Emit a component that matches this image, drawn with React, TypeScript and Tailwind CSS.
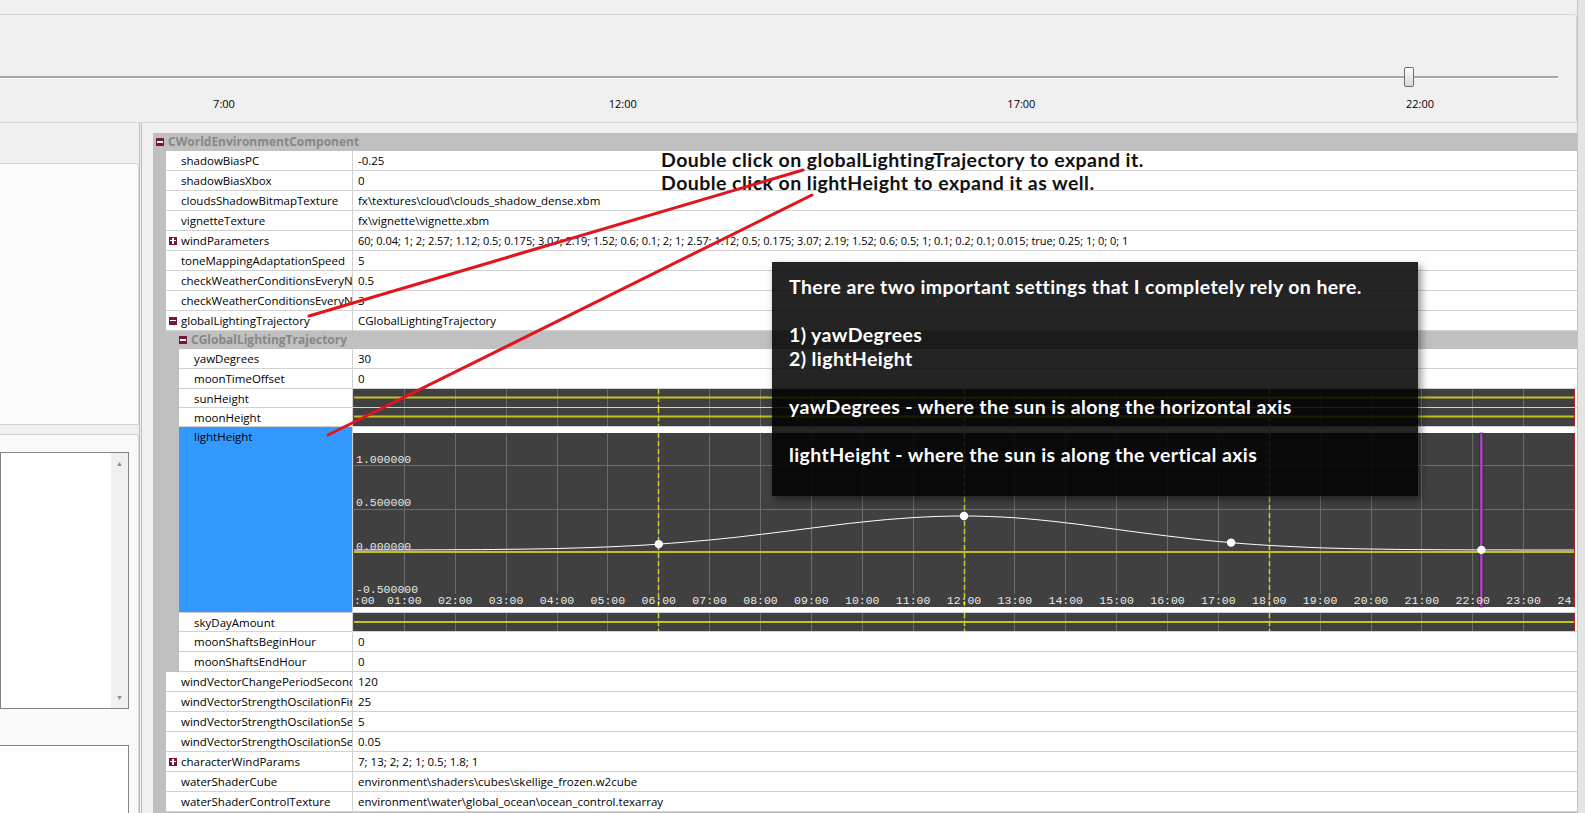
import React from "react";

const HOUR = 50.875;
const hx = (h: number) => 0.5 + h * HOUR;
const gx = (i: number) => Math.round(i * HOUR) + 0.5;
const CW = 1222;

function curveY(h: number) {
  const s = h < 12 ? 3.2 : 3.0;
  return 123 - 34 * Math.exp(-((h - 12) ** 2) / (2 * s * s));
}

function HourLines({ y1, y2 }: { y1: number; y2: number }) {
  return (
    <>
      {Array.from({ length: 25 }, (_, i) => (
        <line key={i} x1={gx(i)} x2={gx(i)} y1={y1} y2={y2} stroke="#6c6c6c" strokeWidth={1} />
      ))}
    </>
  );
}

function Dashed({ y1, y2 }: { y1: number; y2: number }) {
  return (
    <>
      {[6, 12, 18].map((h) => (
        <line key={h} x1={gx(h)} x2={gx(h)} y1={y1} y2={y2} stroke="#d2cf1c" strokeWidth={1.5} strokeDasharray="5 3" />
      ))}
    </>
  );
}

function Strip({ lineY = 8.5 }: { lineY?: number }) {
  const H = 19;
  return (
    <svg width={CW} height={H} className="block">
      <rect x={0} y={0} width={CW} height={H} fill="#404040" />
      <HourLines y1={0} y2={H} />
      <line x1={0} x2={CW} y1={lineY} y2={lineY} stroke="#c4c21e" strokeWidth={2} />
      <Dashed y1={0} y2={H} />
      <line x1={0.5} x2={0.5} y1={0} y2={H} stroke="#b02020" strokeWidth={1} />
      <line x1={gx(24)} x2={gx(24)} y1={0} y2={H} stroke="#b02020" strokeWidth={1} />
    </svg>
  );
}

function LightChart() {
  const H = 186;
  const top = 6;
  const bot = 180;
  const pts: string[] = [];
  for (let h = 0; h <= 24.001; h += 0.25) pts.push(`${hx(h).toFixed(1)},${curveY(h).toFixed(1)}`);
  const dots = [6, 12, 17.25, 22.17];
  return (
    <svg width={CW} height={H} className="block">
      <rect x={0} y={0} width={CW} height={H} fill="#ffffff" />
      <rect x={0} y={top} width={CW} height={bot - top} fill="#404040" />
      <HourLines y1={top} y2={167} />
      {[38.5, 82.5].map((y) => (
        <line key={y} x1={0} x2={CW} y1={y} y2={y} stroke="#6c6c6c" strokeWidth={1} />
      ))}
      <line x1={0} x2={CW} y1={125} y2={125} stroke="#c4c21e" strokeWidth={2} />
      <Dashed y1={top} y2={bot} />
      <polyline points={pts.join(" ")} fill="none" stroke="#ffffff" strokeWidth={1} />
      <rect x={hx(22.17) - 1.5} y={top} width={3} height={bot - top} fill="#b54cc6" stroke="#2a102e" strokeWidth={0.6} />
      {dots.map((h) => (
        <circle key={h} cx={hx(h)} cy={curveY(h)} r={4.2} fill="#ffffff" />
      ))}
      <g fontFamily="'Liberation Mono', monospace" fontSize={11.5} fill="#e8e8e8">
        <text x={3} y={36}>1.000000</text>
        <text x={3} y={79}>0.500000</text>
        <text x={3} y={123}>0.000000</text>
        <text x={3} y={166}>-0.500000</text>
        <text x={1} y={177}>:00</text>
        {Array.from({ length: 23 }, (_, k) => {
          const i = k + 1;
          return (
            <text key={i} x={hx(i)} y={177} textAnchor="middle">
              {String(i).padStart(2, "0") + ":00"}
            </text>
          );
        })}
        <text x={hx(24) - 17} y={177}>24:</text>
      </g>
      <line x1={0.5} x2={0.5} y1={top} y2={bot} stroke="#b02020" strokeWidth={1} />
      <line x1={gx(24)} x2={gx(24)} y1={top} y2={bot} stroke="#b02020" strokeWidth={1} />
    </svg>
  );
}

function Box({ sign }: { sign: "+" | "-" }) {
  return (
    <span className="w-[8px] h-[8px] bg-[#7e1438] flex items-center justify-center shrink-0 relative">
      <span className="w-[6px] h-[1.5px] bg-white" />
      {sign === "+" && <span className="absolute w-[1.5px] h-[6px] bg-white" />}
    </span>
  );
}

type RowProps = {
  name: string;
  value?: React.ReactNode;
  level?: 0 | 1;
  icon?: "+" | "-";
  h?: string;
  selected?: boolean;
  chart?: boolean;
};

function Row({ name, value, level = 0, icon, h = "h-[20px]", selected, chart }: RowProps) {
  return (
    <div className={`flex ${h} ${level === 0 ? "ml-[13px]" : "ml-[26px]"} bg-white border-b border-[#d2d2d2]`}>
      <div
        className={`${level === 0 ? "w-[187px]" : "w-[174px]"} shrink-0 border-r border-[#d2d2d2] flex items-start overflow-hidden whitespace-nowrap ${
          selected ? "bg-[#3399ff]" : ""
        }`}
      >
        <div className="h-[19px] flex items-center">
          <span className="w-[15px] shrink-0 pl-[3px] flex items-center">{icon && <Box sign={icon} />}</span>
          <span className="text-black leading-[16px]">{name}</span>
        </div>
      </div>
      <div className={`flex-1 min-w-0 overflow-hidden whitespace-nowrap ${chart ? "" : "pl-[5px] flex items-center"}`}>
        {value}
      </div>
    </div>
  );
}

function Header({ text, level = 0 }: { text: string; level?: 0 | 1 }) {
  return (
    <div className={`h-[18px] flex items-center gap-[4px] ${level === 0 ? "pl-[3px]" : "pl-[26px]"} bg-[#c0c0c0]`}>
      <Box sign="-" />
      <span className="font-bold text-[#878787] text-[12px]">{text}</span>
    </div>
  );
}

export default function App() {
  const hours = ["7:00", "12:00", "17:00", "22:00"];
  return (
    <div
      className="w-[1585px] h-[813px] bg-[#f0f0f0] overflow-hidden relative flex text-[11.5px] leading-none"
      style={{ fontFamily: "'Open Sans', 'Noto Sans', sans-serif" }}
    >
      <div className="w-[1577px] flex flex-col">
        {/* timeline */}
        <div className="h-[14px]" />
        <div className="h-[109px] w-[1577px] border-t border-b border-r border-[#d6d6d6] rounded-r-[3px] flex flex-col">
          <div className="h-[52px]" />
          <div className="flex items-center h-[20px]">
            <div className="w-[1404px] h-[3px] border-t-2 border-[#a8a8a8] bg-white" />
            <div className="w-[10px] h-[20px] rounded-[2px] border border-[#6f6f6f] bg-gradient-to-b from-white to-[#d8d8d8]" />
            <div className="w-[144px] h-[3px] border-t-2 border-[#a8a8a8] bg-white" />
          </div>
          <div className="mt-[11px] flex pl-[184px] gap-[318.7px] text-[11px] text-black">
            {hours.map((t) => (
              <div key={t} className="w-[80px] text-center">
                {t}
              </div>
            ))}
          </div>
        </div>

        {/* body */}
        <div className="flex flex-1 min-h-0">
          {/* left panel */}
          <div className="w-[142px] border-r-[3px] border-double border-[#bdbdbd] flex flex-col">
            <div className="h-[40px]" />
            <div className="h-[262px] w-[139px] border-t border-r border-b border-[#d2d2d2] rounded-tr-[3px] bg-[#fcfcfc]" />
            <div className="mt-[9px] flex-1 w-[139px] border-t border-r border-[#d2d2d2] rounded-tr-[3px] bg-[#fafafa] flex flex-col pt-[17px]">
              <div className="h-[257px] w-[129px] border border-[#848484] bg-white flex justify-end">
                <div className="w-[17px] bg-[#f0f0f0] flex flex-col justify-between items-center py-[7px] text-[7px] text-[#8a8a8a]">
                  <span>▲</span>
                  <span>▼</span>
                </div>
              </div>
              <div className="mt-[36px] flex-1 w-[129px] border-t border-r border-[#848484] bg-white" />
            </div>
          </div>
          <div className="w-[11px]" />

          {/* property grid */}
          <div className="flex-1 flex flex-col">
            <div className="h-[10px]" />
            <div className="flex-1 bg-[#c0c0c0] flex flex-col">
              <Header text="CWorldEnvironmentComponent" />
              <Row name="shadowBiasPC" value="-0.25" />
              <Row name="shadowBiasXbox" value="0" />
              <Row name="cloudsShadowBitmapTexture" value="fx\textures\cloud\clouds_shadow_dense.xbm" />
              <Row name="vignetteTexture" value="fx\vignette\vignette.xbm" />
              <Row
                name="windParameters"
                icon="+"
                value={
                  <span className="text-[11px]">
                    60; 0.04; 1; 2; 2.57; 1.12; 0.5; 0.175; 3.07; 2.19; 1.52; 0.6; 0.1; 2; 1; 2.57; 1.12; 0.5; 0.175; 3.07; 2.19; 1.52; 0.6; 0.5; 1; 0.1; 0.2; 0.1; 0.015; true; 0.25; 1; 0; 0; 1
                  </span>
                }
              />
              <Row name="toneMappingAdaptationSpeed" value="5" />
              <Row name="checkWeatherConditionsEveryNl" value="0.5" />
              <Row name="checkWeatherConditionsEveryNl" value="3" />
              <Row name="globalLightingTrajectory" icon="-" value="CGlobalLightingTrajectory" />
              <Header text="CGlobalLightingTrajectory" level={1} />
              <Row level={1} name="yawDegrees" value="30" />
              <Row level={1} name="moonTimeOffset" value="0" />
              <Row level={1} name="sunHeight" h="h-[19px]" chart value={<Strip />} />
              <Row level={1} name="moonHeight" h="h-[19px]" chart value={<Strip />} />
              <Row level={1} name="lightHeight" h="h-[186px]" selected chart value={<LightChart />} />
              <Row level={1} name="skyDayAmount" h="h-[19px]" chart value={<Strip lineY={9} />} />
              <Row level={1} name="moonShaftsBeginHour" value="0" />
              <Row level={1} name="moonShaftsEndHour" value="0" />
              <Row name="windVectorChangePeriodSecond" value="120" />
              <Row name="windVectorStrengthOscilationFir" value="25" />
              <Row name="windVectorStrengthOscilationSe" value="5" />
              <Row name="windVectorStrengthOscilationSe" value="0.05" />
              <Row name="characterWindParams" icon="+" value="7; 13; 2; 2; 1; 0.5; 1.8; 1" />
              <Row name="waterShaderCube" value="environment\shaders\cubes\skellige_frozen.w2cube" />
              <Row name="waterShaderControlTexture" value="environment\water\global_ocean\ocean_control.texarray" />
            </div>
          </div>
        </div>
      </div>
      {/* right scroll strip */}
      <div className="w-[8px] bg-[#e4e4e4] border-l border-[#c4c4c4]" />

      {/* annotations */}
      <div
        className="absolute left-[661px] top-[148px] text-[19.5px] tracking-[0.45px] leading-[23px] font-bold text-[#111] whitespace-nowrap"
        style={{ fontFamily: "Lato, 'Open Sans', sans-serif" }}
      >
        <div>Double click on globalLightingTrajectory to expand it.</div>
        <div>Double click on lightHeight to expand it as well.</div>
      </div>

      <svg className="absolute left-0 top-0 pointer-events-none" width={1585} height={813}>
        <line x1={309} y1={316} x2={803} y2={170} stroke="#e3141b" strokeWidth={3} strokeLinecap="round" />
        <line x1={328} y1={435} x2={812} y2={195} stroke="#e3141b" strokeWidth={3} strokeLinecap="round" />
      </svg>

      <div
        className="absolute left-[772px] top-[262px] w-[646px] h-[234px] bg-black/[0.86] shadow-[3px_4px_8px_rgba(0,0,0,0.45)] pl-[17px] pt-[13px] text-[19.5px] tracking-[0.4px] leading-[24px] font-bold text-white whitespace-nowrap"
        style={{ fontFamily: "Lato, 'Open Sans', sans-serif" }}
      >
        <div>There are two important settings that I completely rely on here.</div>
        <div>&nbsp;</div>
        <div>1) yawDegrees</div>
        <div>2) lightHeight</div>
        <div>&nbsp;</div>
        <div>yawDegrees - where the sun is along the horizontal axis</div>
        <div>&nbsp;</div>
        <div>lightHeight - where the sun is along the vertical axis</div>
      </div>
    </div>
  );
}
